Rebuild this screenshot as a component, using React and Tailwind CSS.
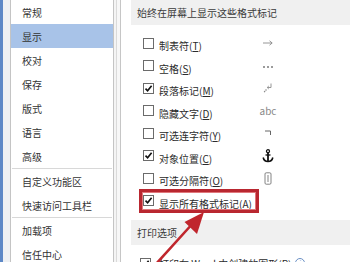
import React from "react";

const font = { fontFamily: '"Noto Sans CJK SC", "Noto Sans", sans-serif' };

function Box({ checked }) {
  return (
    <div className="w-[11px] h-[11px] border border-[#6b6b6b] bg-white flex items-center justify-center shrink-0">
      {checked && (
        <svg width="9" height="9" viewBox="0 0 9 9">
          <path d="M1.5 4.6 L3.6 6.8 L7.6 1.8" fill="none" stroke="#111" strokeWidth="1.6" />
        </svg>
      )}
    </div>
  );
}

function Icon({ type }) {
  switch (type) {
    case "tab":
      return (
        <svg width="12" height="8" viewBox="0 0 12 8">
          <path d="M1 4 H10 M7.5 1.8 L10.2 4 L7.5 6.2" fill="none" stroke="#8a8a8a" strokeWidth="0.9" />
        </svg>
      );
    case "space":
      return (
        <svg width="12" height="8" viewBox="0 0 12 8">
          <circle cx="2" cy="5" r="1" fill="#7a7a7a" />
          <circle cx="6" cy="5" r="1" fill="#7a7a7a" />
          <circle cx="10" cy="5" r="1" fill="#7a7a7a" />
        </svg>
      );
    case "para":
      return (
        <svg width="12" height="12" viewBox="0 0 12 12">
          <path d="M9 1.5 V5.5 H5.5" fill="none" stroke="#8a8a8a" strokeWidth="0.9" />
          <path d="M6.8 4 L5.2 5.5 L6.8 7" fill="none" stroke="#8a8a8a" strokeWidth="0.9" />
          <circle cx="4" cy="8" r="0.8" fill="#8a8a8a" />
          <circle cx="2.6" cy="9.6" r="0.8" fill="#8a8a8a" />
        </svg>
      );
    case "abc":
      return <span className="text-[10px] text-[#888] leading-none">abc</span>;
    case "hyph":
      return (
        <svg width="10" height="8" viewBox="0 0 10 8">
          <path d="M2 2 H7.5 V6" fill="none" stroke="#666" strokeWidth="1" />
        </svg>
      );
    case "anchor":
      return (
        <svg width="12" height="14" viewBox="0 0 12 14">
          <circle cx="6" cy="2.2" r="1.5" fill="none" stroke="#111" strokeWidth="1.3" />
          <path d="M6 3.7 V12.5" stroke="#111" strokeWidth="1.8" />
          <path d="M3.5 6 H8.5" stroke="#111" strokeWidth="1.3" />
          <path d="M1.2 8.5 Q2 12.5 6 12.5 Q10 12.5 10.8 8.5" fill="none" stroke="#111" strokeWidth="1.6" />
        </svg>
      );
    case "sep":
      return (
        <svg width="8" height="13" viewBox="0 0 8 13">
          <rect x="1" y="0.8" width="6" height="11.4" rx="1.2" fill="none" stroke="#777" strokeWidth="0.9" />
          <path d="M4 3 V10" stroke="#777" strokeWidth="0.9" />
        </svg>
      );
    default:
      return null;
  }
}

function Label({ text, k }) {
  return (
    <span className="text-[10px] text-[#2b2b2b] whitespace-nowrap">
      {text}(<span className="underline">{k}</span>)
    </span>
  );
}

const rows = [
  { t: "制表符", k: "T", c: false, i: "tab" },
  { t: "空格", k: "S", c: false, i: "space" },
  { t: "段落标记", k: "M", c: true, i: "para" },
  { t: "隐藏文字", k: "D", c: false, i: "abc" },
  { t: "可选连字符", k: "Y", c: false, i: "hyph" },
  { t: "对象位置", k: "C", c: true, i: "anchor" },
  { t: "可选分隔符", k: "O", c: false, i: "sep" },
  { t: "显示所有格式标记", k: "A", c: true, i: null },
];

const nav = [
  "常规",
  "显示",
  "校对",
  "保存",
  "版式",
  "语言",
  "高级",
  "-",
  "自定义功能区",
  "快速访问工具栏",
  "-",
  "加载项",
  "信任中心",
];

export default function App() {
  return (
    <div className="relative flex h-[262px] w-[350px] overflow-hidden bg-white" style={font}>
      <div className="w-[3px] bg-[#5d88c6] shrink-0" />
      <div className="w-[7px] bg-[#eef0f3] shrink-0" />
      <div className="w-[104px] shrink-0 border-x border-[#c4c4c4] bg-white flex flex-col">
        {nav.map((n, idx) =>
          n === "-" ? (
            <div key={idx} className="h-[4px] flex items-center px-[1px]">
              <div className="h-px w-full bg-[#d8d8d8]" />
            </div>
          ) : (
            <div
              key={idx}
              className={`h-[24px] shrink-0 flex items-center pl-[11px] text-[10px] text-[#333] ${
                n === "显示" ? "bg-[#a8c3e8]" : ""
              }`}
            >
              {n}
            </div>
          )
        )}
      </div>
      <div className="w-[2px] shrink-0 bg-[#f4f4f4]" />
      <div className="w-px shrink-0 bg-[#dadada]" />
      <div className="w-[3px] shrink-0 bg-[#f7f7f7]" />
      <div className="flex-1 border-l border-[#c6c6c6] pl-[10px] flex flex-col">
        <div className="h-[25px] shrink-0 bg-[#f0f0f0] flex items-center pl-[6px] text-[10px] text-[#3a3a3a]">
          始终在屏幕上显示这些格式标记
        </div>
        <div className="pt-[7px] flex flex-col">
          {rows.map((r) => (
            <div key={r.t} className="h-[22.5px] shrink-0 flex items-center pl-[12px]">
              <Box checked={r.c} />
              <div className="ml-[5px] w-[101px]">
                <Label text={r.t} k={r.k} />
              </div>
              <div className="w-[16px] flex items-center justify-center">
                {r.i && <Icon type={r.i} />}
              </div>
            </div>
          ))}
        </div>
        <div className="mt-[8px] h-[25px] shrink-0 bg-[#f0f0f0] flex items-center pl-[6px] text-[10px] text-[#3a3a3a]">
          打印选项
        </div>
        <div className="pt-[7px] flex flex-col">
          <div className="h-[22.5px] shrink-0 flex items-center pl-[9px]">
            <Box checked={true} />
            <div className="ml-[8px] flex items-center gap-[4px]">
              <span className="text-[10px] text-[#2b2b2b] whitespace-nowrap">
                打印在 Word 中创建的图形(<span className="underline">R</span>)
              </span>
              <span className="w-[10px] h-[10px] rounded-full border border-[#6a8fc4] text-[7px] leading-none flex items-center justify-center text-[#6a8fc4]">
                i
              </span>
            </div>
          </div>
        </div>
      </div>

      <div className="absolute left-[139px] top-[189px] w-[120px] h-[24px] border-[3px] border-[#b92730] shadow-[inset_0_0_0_1px_#e0787c]" />
      <svg className="absolute left-0 top-0 pointer-events-none" width="350" height="262" viewBox="0 0 350 262">
        <path d="M156 264 L194 222" stroke="#c0262d" strokeWidth="2.6" strokeLinecap="round" />
        <polygon points="204,212 184.5,222 197,234" fill="#c0262d" />
      </svg>
    </div>
  );
}
